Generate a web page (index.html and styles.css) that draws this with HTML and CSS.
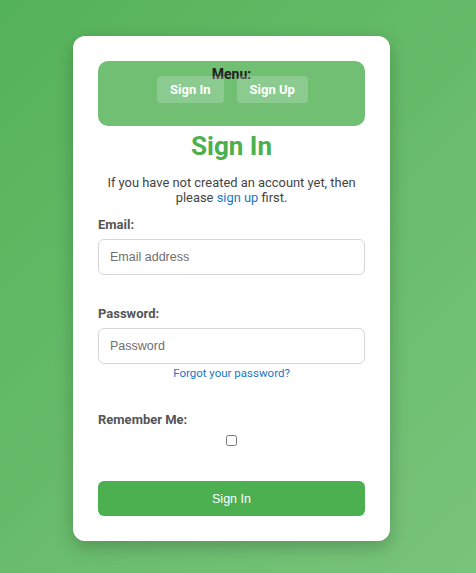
FILE: index.html
```html
<!DOCTYPE html>
<html lang="en">
<head>
<meta charset="utf-8">
<title>Sign In</title>
<link rel="stylesheet" href="styles.css">
</head>
<body>
<div class="card">
  <nav class="menu">
    <div class="menu-title">Menu:</div>
    <div class="menu-buttons">
      <a class="menu-btn" href="#">Sign In</a>
      <a class="menu-btn" href="#">Sign Up</a>
    </div>
  </nav>
  <h1 class="title">Sign In</h1>
  <p class="intro">If you have not created an account yet, then please <a href="#" class="link">sign up</a> first.</p>
  <form class="form">
    <label class="label" for="email">Email:</label>
    <input class="input" id="email" type="email" placeholder="Email address">
    <label class="label label-pw" for="pw">Password:</label>
    <input class="input" id="pw" type="password" placeholder="Password">
    <a href="#" class="link forgot">Forgot your password?</a>
    <label class="label label-rm" for="rm">Remember Me:</label>
    <div class="check-row"><input type="checkbox" id="rm" class="check"></div>
    <button type="button" class="submit">Sign In</button>
  </form>
</div>
</body>
</html>
```
FILE: styles.css
```css
* { box-sizing: border-box; }
html, body { height: 100%; }
body {
  margin: 0;
  font-family: Roboto, "Liberation Sans", Arial, sans-serif;
  background: linear-gradient(135deg, #55b359 0%, #78c47b 100%);
  padding: 36px 0 0 73px;
}
.card {
  width: 317px;
  height: 505px;
  background: #fff;
  border-radius: 12px;
  box-shadow: 0 6px 18px rgba(0,0,0,0.22);
  padding: 25px;
  display: flex;
  flex-direction: column;
}
.menu {
  background: rgba(76,175,80,0.8);
  border-radius: 10px;
  height: 66px;
  padding-top: 5px;
  display: flex;
  flex-direction: column;
  align-items: center;
}
.menu-title {
  font-weight: bold;
  font-size: 14px;
  line-height: 16px;
  color: #222;
}
.menu-buttons {
  display: flex;
  gap: 13px;
  margin-top: -6px;
  margin-left: 2px;
}
.menu-btn {
  display: block;
  background: rgba(255,255,255,0.2);
  color: #fff;
  font-weight: bold;
  font-size: 13px;
  text-decoration: none;
  height: 27px;
  line-height: 27px;
  padding: 0 13px;
  border-radius: 4px;
}
.title {
  margin: 5px 0 0;
  text-align: center;
  color: #4caf50;
  font-size: 26px;
  line-height: 30px;
  font-weight: bold;
}
.intro {
  margin: 14px 0 0;
  text-align: center;
  font-size: 12.9px;
  line-height: 15px;
  color: #444;
}
.link { color: #1976c7; text-decoration: none; }
.form { display: flex; flex-direction: column; }
.label {
  font-weight: bold;
  font-size: 13px;
  line-height: 16px;
  color: #555;
  margin-top: 12px;
}
.label-pw { margin-top: 31px; }
.label-rm { margin-top: 31px; }
.input {
  margin-top: 6px;
  height: 36px;
  border: 1px solid #d6d6d6;
  border-radius: 6px;
  padding: 0 11px;
  font-family: "Liberation Sans", Arial, sans-serif;
  font-size: 12.5px;
  color: #333;
}
.input::placeholder { color: #6f6f6f; }
.forgot {
  font-size: 11.5px;
  line-height: 16px;
  text-align: center;
  margin-top: 1px;
}
.check-row { display: flex; justify-content: center; margin-top: 3px; }
.check { margin: 4px 0 0; width: 11px; height: 11px; }
.submit {
  margin-top: 35px;
  height: 35px;
  background: #4caf50;
  color: #fff;
  border: none;
  border-radius: 6px;
  font-family: "Liberation Sans", Arial, sans-serif;
  font-size: 12.5px;
}
```
